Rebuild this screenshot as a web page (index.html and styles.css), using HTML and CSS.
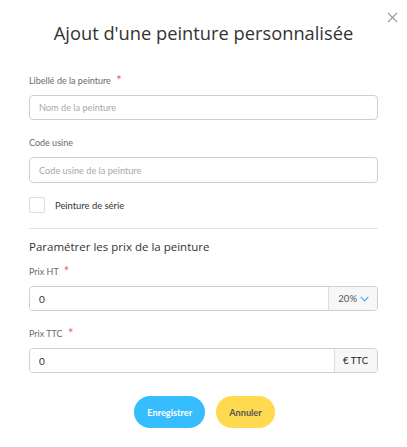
FILE: index.html
```html
<!DOCTYPE html>
<html lang="fr">
<head>
    <meta charset="UTF-8">
    <meta name="viewport" content="width=device-width, initial-scale=1.0">
    <title>Ajout d'une peinture personnalisée</title>
    <link rel="stylesheet" href="styles.css">
</head>
<body>

    <div class="modal">
        <button class="close-btn" aria-label="Fermer">
            <svg width="11" height="11" viewBox="0 0 11 11">
                <path d="M1 1L10 10M10 1L1 10" stroke="#9a9a9a" stroke-width="1.1" fill="none"/>
            </svg>
        </button>

        <h2 class="title">Ajout d'une peinture personnalisée</h2>

        <div class="field first">
            <label>Libellé de la peinture <span class="req">*</span></label>
            <input type="text" class="input" placeholder="Nom de la peinture">
        </div>

        <div class="field">
            <label>Code usine</label>
            <input type="text" class="input tall" placeholder="Code usine de la peinture">
        </div>

        <div class="check-row">
            <span class="checkbox"></span>
            <span>Peinture de série</span>
        </div>

        <hr class="divider">

        <h3 class="section-title">Paramétrer les prix de la peinture</h3>

        <div class="field tight">
            <label>Prix HT <span class="req">*</span></label>
            <div class="input-group">
                <input type="text" class="input" value="0">
                <span class="addon">20%
                    <svg width="9" height="6" viewBox="0 0 9 6">
                        <path d="M0.7 0.8L4.5 4.8L8.3 0.8" stroke="#3db3f5" stroke-width="1.2" fill="none"/>
                    </svg>
                </span>
            </div>
        </div>

        <div class="field">
            <label>Prix TTC <span class="req">*</span></label>
            <div class="input-group">
                <input type="text" class="input" value="0">
                <span class="addon dark">€ TTC</span>
            </div>
        </div>

        <div class="actions">
            <button class="btn btn-save">Enregistrer</button>
            <button class="btn btn-cancel">Annuler</button>
        </div>
    </div>

</body>
</html>
```

FILE: styles.css
```css
body {
    margin: 0;
    background: #fff;
    font-family: Lato, "Open Sans", sans-serif;
}
.modal {
    position: relative;
    padding: 19px 29px 20px;
}
.close-btn {
    position: absolute;
    top: 12px;
    right: 9px;
    border: none;
    background: none;
    padding: 0;
    cursor: pointer;
    line-height: 0;
}
.title {
    margin: 0;
    font-family: "Open Sans", sans-serif;
    font-weight: 400;
    font-size: 18.3px;
    line-height: 28px;
    color: #333;
    text-align: center;
}
.field {
    margin-top: 16px;
}
.field.first {
    margin-top: 27px;
}
.field.tight {
    margin-top: 9px;
}
.field label {
    display: block;
    font-size: 9px;
    line-height: 14px;
    color: #6a6a6a;
    margin-bottom: 7px;
}
.req {
    color: #f25b5b;
    font-size: 13px;
    vertical-align: top;
    line-height: 12px;
    margin-left: 3px;
}
.input {
    display: block;
    box-sizing: border-box;
    width: 100%;
    height: 25px;
    padding: 0 9px;
    border: 1px solid #cfcfcf;
    border-radius: 4px;
    font-family: Lato, sans-serif;
    font-size: 9.2px;
    color: #333;
    outline: none;
}
.input.tall {
    height: 26px;
}
.input::placeholder {
    color: #a8a8a8;
}
.input-group {
    display: flex;
    border: 1px solid #cfcfcf;
    border-radius: 4px;
    height: 25px;
    box-sizing: border-box;
    overflow: hidden;
}
.input-group .input {
    flex: 1;
    height: 100%;
    border: none;
    border-radius: 0;
    font-size: 10px;
}
.addon {
    display: flex;
    align-items: center;
    gap: 3px;
    padding: 0 8px 0 9px;
    background: #f7f7f7;
    border-left: 1px solid #dcdcdc;
    font-size: 9.5px;
    color: #555;
}
.addon.dark {
    color: #222;
    padding: 0 9px 0 8px;
}
.check-row {
    display: flex;
    align-items: center;
    gap: 10px;
    margin-top: 14px;
    font-size: 9.4px;
    color: #333;
}
.checkbox {
    width: 16px;
    height: 16px;
    box-sizing: border-box;
    border: 1px solid #ddd;
    border-radius: 2px;
}
.divider {
    border: none;
    border-top: 1px solid #e2e2e2;
    margin: 15px 0 0;
}
.section-title {
    margin: 9px 0 0;
    font-family: "Open Sans", sans-serif;
    font-weight: 400;
    font-size: 11.5px;
    line-height: 18px;
    color: #333;
}
.actions {
    display: flex;
    justify-content: center;
    gap: 11px;
    margin-top: 23px;
    padding-left: 2px;
}
.btn {
    height: 32px;
    padding: 0 13px;
    border: none;
    border-radius: 16px;
    font-family: Lato, sans-serif;
    font-weight: 700;
    font-size: 9.2px;
    cursor: pointer;
}
.btn-save {
    background: #35bdfd;
    color: #fff;
}
.btn-cancel {
    background: #ffd94f;
    color: #555;
    padding: 0 13px;
}
```
